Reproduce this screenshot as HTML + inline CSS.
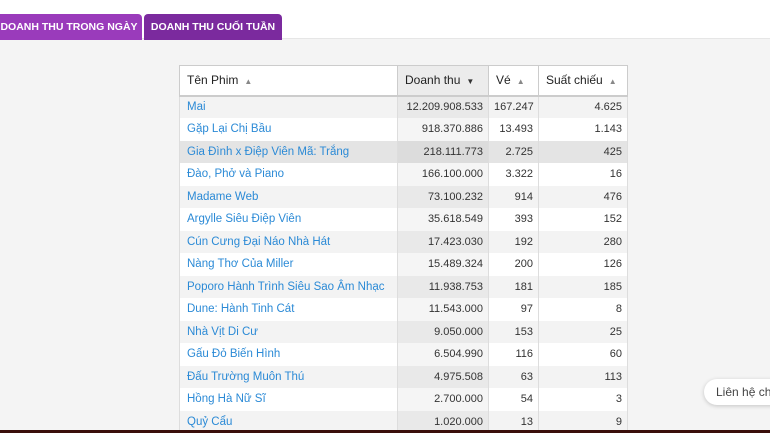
<!DOCTYPE html>
<html><head><meta charset="utf-8"><style>
*{margin:0;padding:0;box-sizing:border-box}
body{width:770px;height:433px;overflow:hidden;background:#f4f4f4;font-family:"Liberation Sans",sans-serif;position:relative}
.top{position:absolute;left:0;top:0;width:770px;height:39px;background:#fff;border-bottom:1px solid #e6e6e6}
.tab{position:absolute;top:14px;height:26px;color:#fff;font-weight:bold;font-size:10.5px;line-height:26px;text-align:center;border-radius:4px 4px 0 0;white-space:nowrap}
.t1{left:-4px;width:146px;background:#9a3bbb}
.t2{left:144px;width:138px;background:#7b2a9e}
table{position:absolute;left:179px;top:65px;width:448px;table-layout:fixed;border-collapse:collapse;font-size:11.5px;color:#333;background:#fff}
th{height:30px;text-align:left;font-weight:normal;padding:0 7px;border:1px solid #ccc;border-bottom:2px solid #ccc;font-size:12px;color:#222;white-space:nowrap}
th .a{font-size:8px;color:#888;margin-left:6px}
td{height:22.5px;padding:0 6px;border-left:1px solid #ddd;border-right:1px solid #ddd;white-space:nowrap;overflow:hidden}
td.n{text-align:left;color:#2b8ad6;padding-left:7px}
td.r{text-align:right;font-size:11px;padding:0 5px}
tr.o td{background:#f3f3f3}
tr.o td.s{background:#e9e9e9}
td.s{background:#f5f5f5}
th.s{background:#ececec}
tr.h td{background:#e4e4e4}
tr.h td.s{background:#dcdcdc}
.lh{position:absolute;left:704px;top:379px;width:100px;height:26px;background:#fff;border-radius:13px;box-shadow:0 1px 4px rgba(0,0,0,.2);font-size:12px;color:#444;line-height:26px;padding-left:12px;white-space:nowrap;overflow:hidden}
.bot{position:absolute;left:0;top:430px;width:770px;height:3px;background:#3a0e0a}
</style></head><body>
<div class="top"></div>
<div class="tab t1">DOANH THU TRONG NGÀY</div>
<div class="tab t2">DOANH THU CUỐI TUẦN</div>
<table>
<colgroup><col style="width:218px"><col style="width:91px"><col style="width:50px"><col style="width:89px"></colgroup>
<tr><th>Tên Phim<span class="a">▲</span></th><th class="s">Doanh thu<span class="a" style="color:#333">▼</span></th><th>Vé<span class="a">▲</span></th><th>Suất chiếu<span class="a">▲</span></th></tr>
<tr class="o"><td class="n">Mai</td><td class="r s">12.209.908.533</td><td class="r">167.247</td><td class="r">4.625</td></tr>
<tr><td class="n">Gặp Lại Chị Bầu</td><td class="r s">918.370.886</td><td class="r">13.493</td><td class="r">1.143</td></tr>
<tr class="h"><td class="n">Gia Đình x Điệp Viên Mã: Trắng</td><td class="r s">218.111.773</td><td class="r">2.725</td><td class="r">425</td></tr>
<tr><td class="n">Đào, Phở và Piano</td><td class="r s">166.100.000</td><td class="r">3.322</td><td class="r">16</td></tr>
<tr class="o"><td class="n">Madame Web</td><td class="r s">73.100.232</td><td class="r">914</td><td class="r">476</td></tr>
<tr><td class="n">Argylle Siêu Điệp Viên</td><td class="r s">35.618.549</td><td class="r">393</td><td class="r">152</td></tr>
<tr class="o"><td class="n">Cún Cưng Đại Náo Nhà Hát</td><td class="r s">17.423.030</td><td class="r">192</td><td class="r">280</td></tr>
<tr><td class="n">Nàng Thơ Của Miller</td><td class="r s">15.489.324</td><td class="r">200</td><td class="r">126</td></tr>
<tr class="o"><td class="n">Poporo Hành Trình Siêu Sao Âm Nhạc</td><td class="r s">11.938.753</td><td class="r">181</td><td class="r">185</td></tr>
<tr><td class="n">Dune: Hành Tinh Cát</td><td class="r s">11.543.000</td><td class="r">97</td><td class="r">8</td></tr>
<tr class="o"><td class="n">Nhà Vịt Di Cư</td><td class="r s">9.050.000</td><td class="r">153</td><td class="r">25</td></tr>
<tr><td class="n">Gấu Đỏ Biến Hình</td><td class="r s">6.504.990</td><td class="r">116</td><td class="r">60</td></tr>
<tr class="o"><td class="n">Đấu Trường Muôn Thú</td><td class="r s">4.975.508</td><td class="r">63</td><td class="r">113</td></tr>
<tr><td class="n">Hồng Hà Nữ Sĩ</td><td class="r s">2.700.000</td><td class="r">54</td><td class="r">3</td></tr>
<tr class="o"><td class="n">Quỷ Cẩu</td><td class="r s">1.020.000</td><td class="r">13</td><td class="r">9</td></tr>
</table>
<div class="lh">Liên hệ chúng tôi</div>
<div class="bot"></div>
</body></html>
